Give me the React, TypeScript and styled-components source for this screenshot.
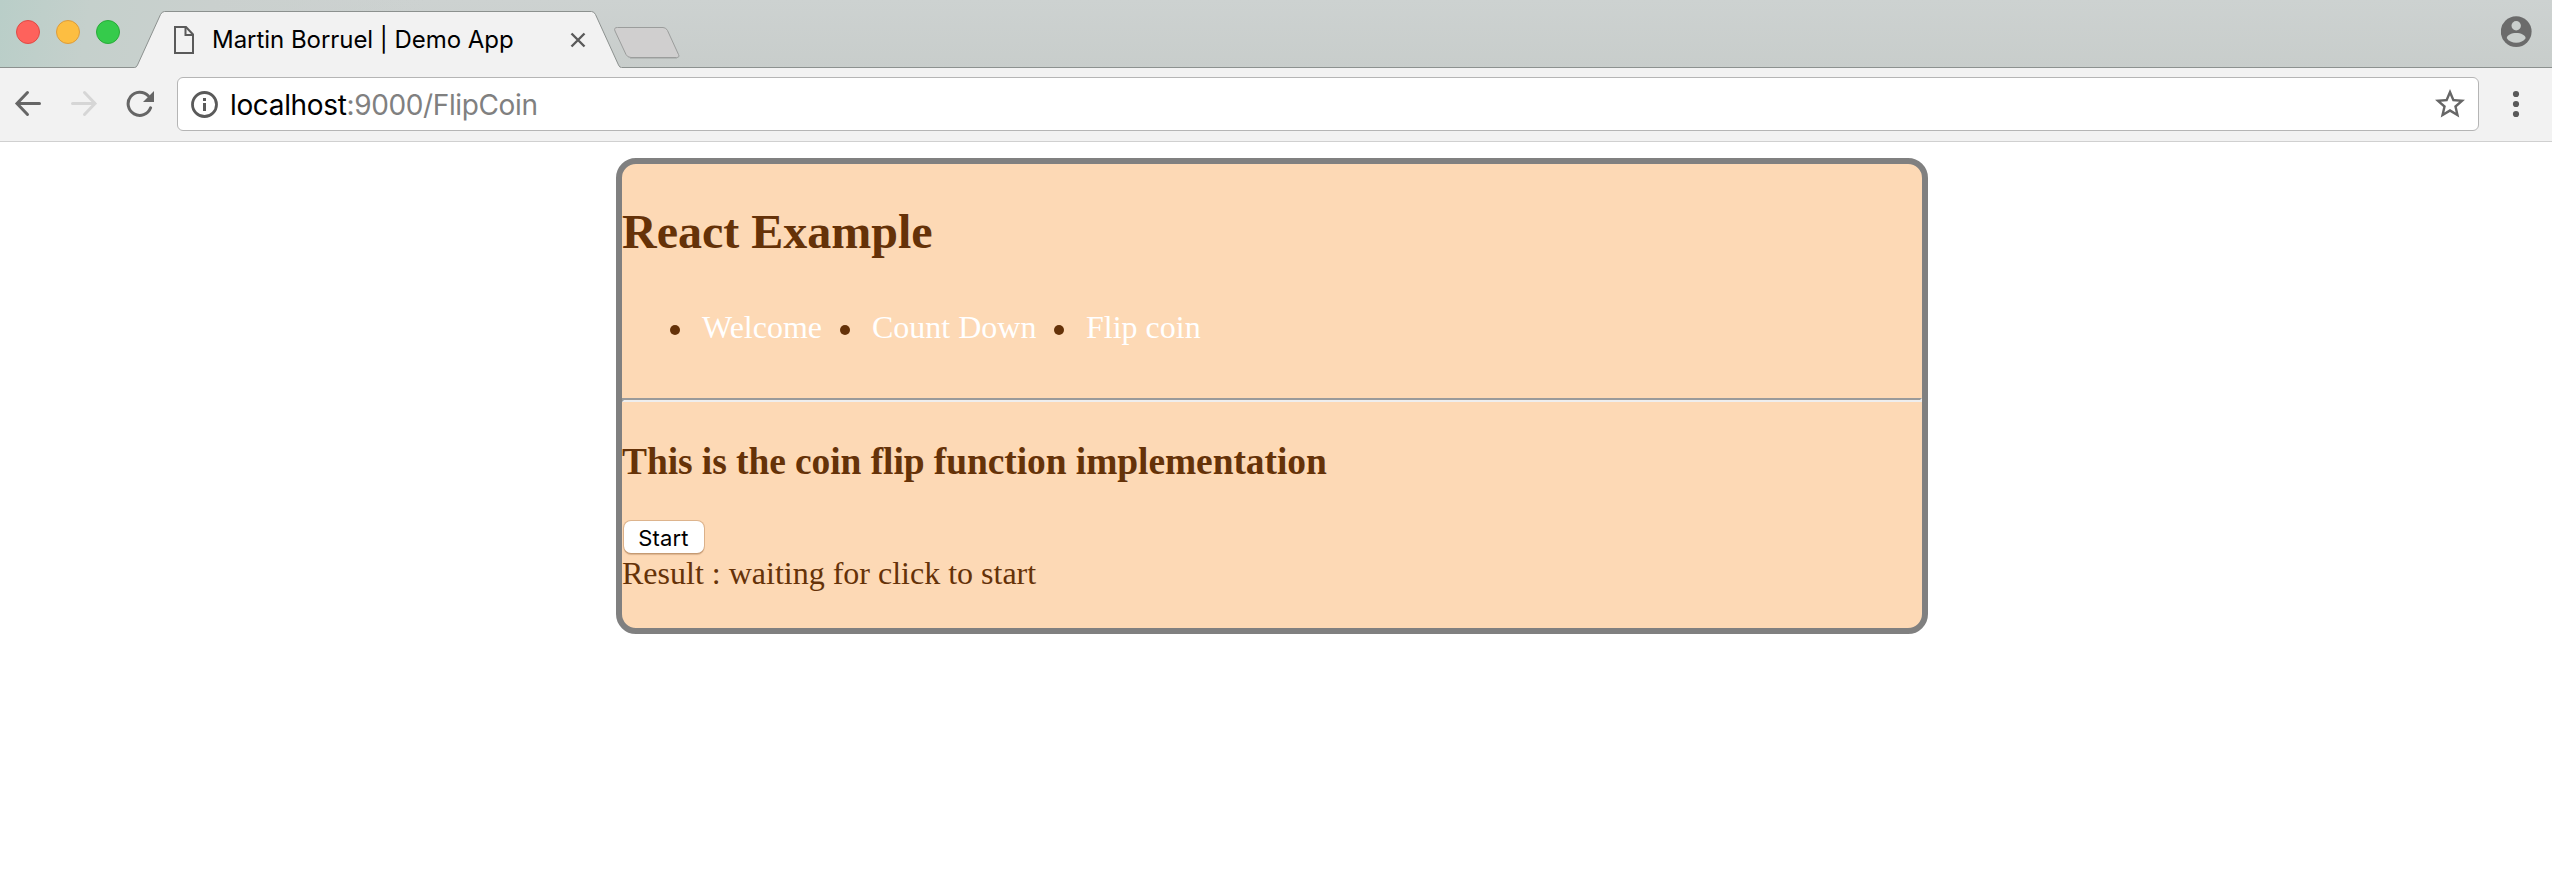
import React, { useState } from "react";
import styled, { createGlobalStyle } from "styled-components";

const GlobalStyle = createGlobalStyle`
  html, body { margin: 0; padding: 0; background: #fff; }
  *, *::before, *::after { box-sizing: border-box; }
  svg { display: block; flex: none; }
`;

const uiFont = `Inter, Roboto, "Liberation Sans", sans-serif`;

const Window = styled.div`
  display: flex;
  flex-direction: column;
  width: 2552px;
  height: 886px;
  overflow: hidden;
  background: #fff;
`;

const TitleBar = styled.header`
  display: flex;
  align-items: flex-start;
  height: 68px;
  padding: 0 20px 0 16px;
  background:
    linear-gradient(#8c918f, #8c918f) bottom / 100% 1px no-repeat,
    linear-gradient(100deg, #b9cec8 0, #c5d0cc 90px, #cad0ce 210px, rgba(202, 208, 206, 0) 420px),
    linear-gradient(#cdd2d1, #c8cdcb);
`;

const Lights = styled.div`
  display: flex;
  gap: 16px;
  margin-top: 20px;
`;

const Light = styled.span<{ $fill: string; $edge: string }>`
  width: 24px;
  height: 24px;
  border-radius: 50%;
  background: ${(p) => p.$fill};
  border: 1px solid ${(p) => p.$edge};
`;

const Tab = styled.div`
  position: relative;
  display: flex;
  width: 488px;
  height: 68px;
  margin-left: 14px;
  padding-left: 40px;
`;

const TabShape = styled.svg`
  position: absolute;
  inset: 0;
`;

const PageIcon = styled.svg`
  position: relative;
  margin-top: 26px;
`;

const TabTitle = styled.span`
  position: relative;
  width: 358px;
  margin: 24px 0 0 18px;
  font: 400 24px/32px ${uiFont};
  letter-spacing: -0.04px;
  white-space: nowrap;
  color: #000;
`;

const CloseIcon = styled.svg`
  position: relative;
  margin: 32px 0 0 0;
`;

const NewTab = styled.svg`
  margin: 26px auto 0 -9.5px;
`;

const Account = styled.svg`
  margin-top: 16px;
`;

const Toolbar = styled.div`
  display: flex;
  align-items: flex-start;
  height: 74px;
  flex: none;
  padding: 9px 20px 0 14px;
  background: #f2f2f2;
  border-bottom: 1px solid #d0d0d0;
`;

const NavIcon = styled.svg<{ $gap: number }>`
  margin-top: 12px;
  margin-right: ${(p) => p.$gap}px;
`;

const AddressBar = styled.div`
  display: flex;
  align-items: center;
  width: 2302px;
  height: 54px;
  padding: 0 10px 0 13px;
  background: #fff;
  border: 1px solid #b5b5b5;
  border-radius: 6px;
`;

const Url = styled.span`
  flex: 1;
  margin: 2px 0 0 12px;
  font: 400 28px/36px ${uiFont};
  letter-spacing: -0.37px;
  color: #808080;
  white-space: nowrap;
`;

const Host = styled.span`
  color: #000;
  letter-spacing: -0.35px;
`;

const Menu = styled.svg`
  margin: 13px 0 0 32px;
`;

const Card = styled.main`
  width: 1312px;
  height: 476px;
  margin: 16px 0 0 616px;
  border: 6px solid #808080;
  border-radius: 20px;
  background: #fdd9b5;
  color: #653208;
  font: 32px/36px "Liberation Serif", "Times New Roman", serif;
`;

const Title = styled.h2`
  margin: 40px 0 0;
  font-size: 48px;
  line-height: 56px;
`;

const Links = styled.ul`
  display: flex;
  list-style: none;
  margin: 49px 0 0;
  padding: 0 0 0 48px;
`;

const LinkItem = styled.li<{ $width: number }>`
  display: flex;
  align-items: center;
  width: ${(p) => p.$width}px;
  &::before {
    content: "";
    width: 10px;
    height: 10px;
    margin: 5px 22px 0 0;
    border-radius: 50%;
    background: #653208;
  }
`;

const Link = styled.a`
  color: #fff;
  text-decoration: none;
  white-space: nowrap;
`;

const Rule = styled.hr`
  height: 4px;
  margin: 53px 0 0;
  border: 2px solid;
  border-color: #9a9a9a #eee #eee #9a9a9a;
`;

const Subtitle = styled.h3`
  margin: 38px 0 0;
  font-size: 37.44px;
  line-height: 44px;
  letter-spacing: -0.05px;
`;

const StartButton = styled.button`
  display: block;
  width: 80px;
  height: 32px;
  margin: 37px 0 0 2px;
  padding: 2px 1px 0 0;
  border: 0;
  border-radius: 7px;
  background: #fff;
  box-shadow: 0 0 0 1px rgba(140, 85, 40, 0.28), 0 1.5px 1px rgba(120, 70, 30, 0.25);
  font: 400 22px/30px ${uiFont};
  letter-spacing: 0.15px;
  color: #000;
`;

const Result = styled.p`
  margin: 2px 0 0;
`;

export default function App() {
  const [result, setResult] = useState("waiting for click to start");
  const flip = () => setResult(Math.random() < 0.5 ? "heads" : "tails");

  return (
    <Window>
      <GlobalStyle />
      <TitleBar>
        <Lights>
          <Light $fill="#fe625c" $edge="#e04a45" />
          <Light $fill="#fdbe41" $edge="#dd9c3b" />
          <Light $fill="#35cb4b" $edge="#29ab39" />
        </Lights>
        <Tab>
          <TabShape width="488" height="68" viewBox="0 0 488 68">
            <path d="M0 68V67.5H0.5Q2.5 67.5 3.5 65L26.5 14.5Q28 11.5 30.5 11.5H457.5Q460 11.5 461.5 14.5L484.5 65Q485.5 67.5 487.5 67.5H488V68Z" fill="#f2f2f2" />
            <path d="M0 67.5H0.5Q2.5 67.5 3.5 65L26.5 14.5Q28 11.5 30.5 11.5H457.5Q460 11.5 461.5 14.5L484.5 65Q485.5 67.5 487.5 67.5" fill="none" stroke="#8c918f" />
          </TabShape>
          <PageIcon width="20" height="28" viewBox="0 0 20 28" fill="none" stroke="#5a5a5a" strokeWidth="2">
            <path d="M1 1H12L19 8.5V27H1Z" />
            <path d="M11.5 1V9H19" />
          </PageIcon>
          <TabTitle>Martin Borruel | Demo App</TabTitle>
          <CloseIcon width="16" height="16" viewBox="0 0 16 16" stroke="#5a5a5a" strokeWidth="2.4">
            <path d="M1.5 1.5L14.5 14.5M14.5 1.5L1.5 14.5" />
          </CloseIcon>
        </Tab>
        <NewTab width="68" height="34" viewBox="0 0 68 34">
          <path d="M17 32.5H64" stroke="#b4b9b7" />
          <path d="M4.5 1.5H50Q53 1.5 54.5 4.5L65.5 28.5Q67 31.5 63.5 31.5H18Q14.5 31.5 13 28.5L2 5Q0.5 1.5 4.5 1.5Z" fill="#d0cfcf" stroke="#9b9d9c" />
        </NewTab>
        <Account width="31" height="31" viewBox="0 0 31 31">
          <circle cx="15.2" cy="15.6" r="15.4" fill="#6b6b6b" />
          <circle cx="15.2" cy="9.8" r="4.7" fill="#cacfcd" />
          <path d="M5.8 22.2C5.8 19 10.6 17 15.2 17S24.6 19 24.6 22.2C22.8 25 19.2 26.8 15.2 26.8S7.6 25 5.8 22.2Z" fill="#cacfcd" />
        </Account>
      </TitleBar>
      <Toolbar>
        <NavIcon $gap={28} width="28" height="30" viewBox="0 0 28 30" fill="none" stroke="#666" strokeWidth="3" strokeLinecap="round">
          <path d="M25.5 14.5H3.5M13.5 3.5L3 14.5L13.5 25.5" />
        </NavIcon>
        <NavIcon $gap={28} width="28" height="30" viewBox="0 0 28 30" fill="none" stroke="#d6d6d6" strokeWidth="3" strokeLinecap="round">
          <path d="M2.5 14.5H25M14.5 3.5L25 14.5L14.5 25.5" />
        </NavIcon>
        <NavIcon $gap={22} width="29" height="30" viewBox="0 0 29 30">
          <path d="M24.6 18.8A11.6 11.6 0 1 1 22.2 6.8" fill="none" stroke="#666" strokeWidth="3" strokeLinecap="round" />
          <path d="M28 2V13H17Z" fill="#666" />
        </NavIcon>
        <AddressBar>
          <svg width="27" height="27" viewBox="0 0 27 27">
            <circle cx="13.5" cy="13.5" r="12" fill="none" stroke="#5a5a5a" strokeWidth="2.8" />
            <path d="M12 7h3v3h-3zM12 12h3v8h-3z" fill="#5a5a5a" />
          </svg>
          <Url>
            <Host>localhost</Host>:9000/FlipCoin
          </Url>
          <svg width="36" height="36" viewBox="0 0 24 24" fill="#666">
            <path d="M22 9.24l-7.19-.62L12 2 9.19 8.63 2 9.24l5.46 4.73L5.82 21 12 17.27 18.18 21l-1.63-7.03L22 9.24zM12 15.4l-3.76 2.27 1-4.28-3.32-2.88 4.38-.38L12 6.1l1.71 4.04 4.38.38-3.32 2.88 1 4.28L12 15.4z" />
          </svg>
        </AddressBar>
        <Menu width="10" height="28" viewBox="0 0 10 28" fill="#5a5a5a">
          <circle cx="5" cy="4" r="3.1" />
          <circle cx="5" cy="14" r="3.1" />
          <circle cx="5" cy="24" r="3.1" />
        </Menu>
      </Toolbar>
      <Card>
        <Title>React Example</Title>
        <Links>
          <LinkItem $width={170}><Link>Welcome</Link></LinkItem>
          <LinkItem $width={214}><Link>Count Down</Link></LinkItem>
          <LinkItem $width={180}><Link>Flip coin</Link></LinkItem>
        </Links>
        <Rule />
        <Subtitle>This is the coin flip function implementation</Subtitle>
        <StartButton onClick={flip}>Start</StartButton>
        <Result>Result : {result}</Result>
      </Card>
    </Window>
  );
}
